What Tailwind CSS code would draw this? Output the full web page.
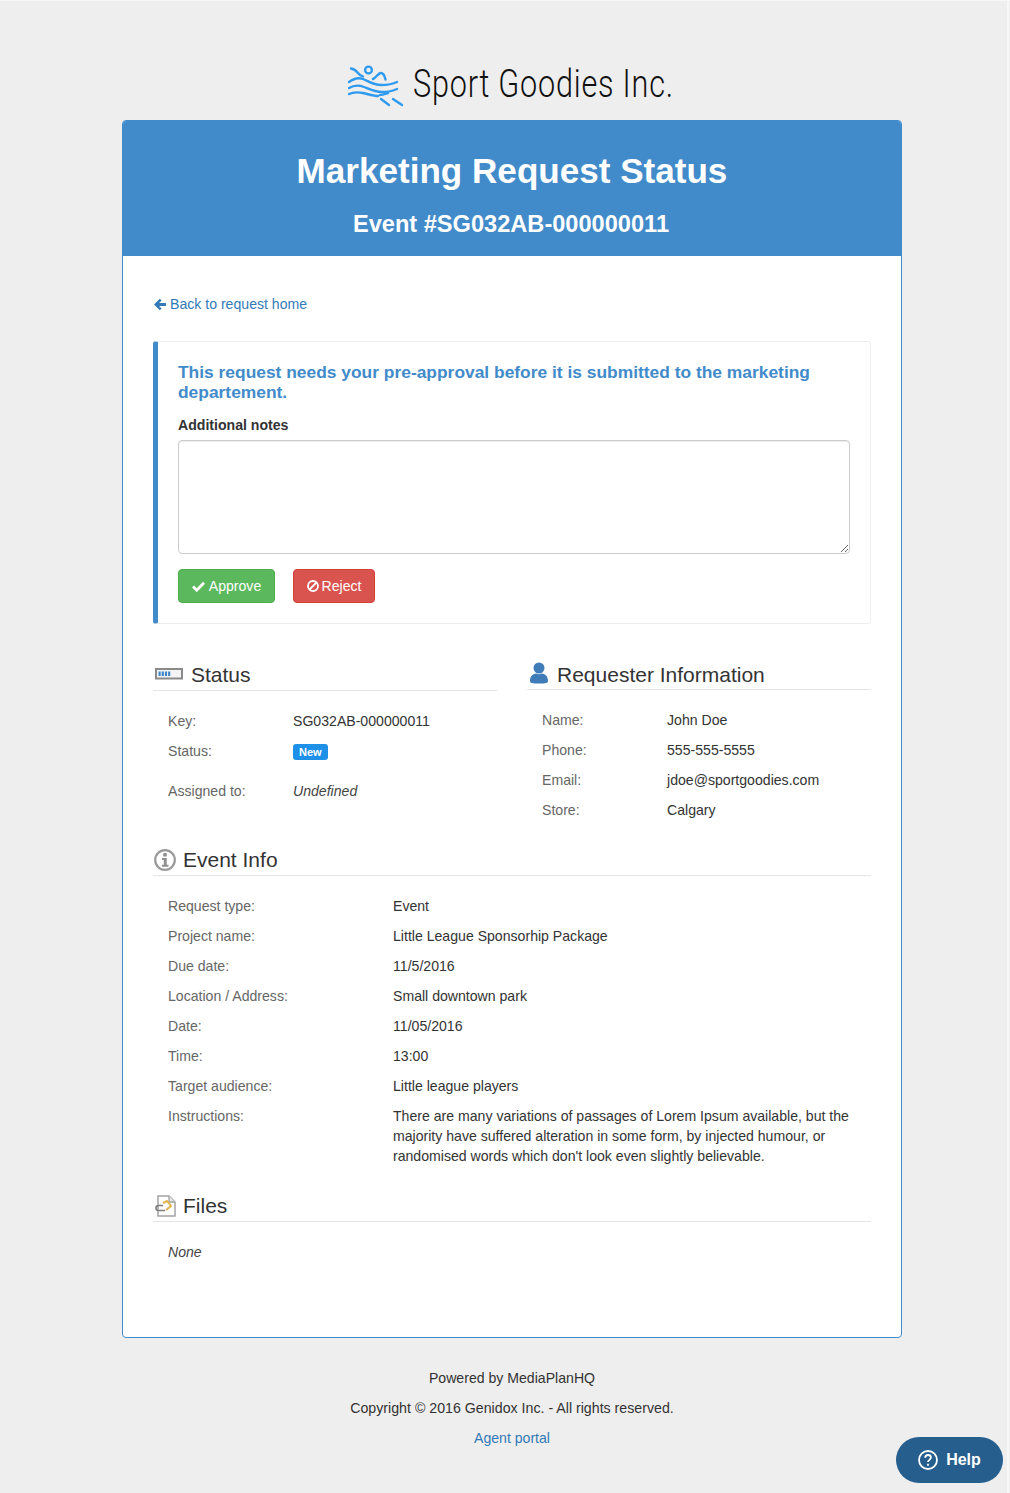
<!DOCTYPE html>
<html lang="en">

<head>
    <meta charset="UTF-8" />
    <meta name="viewport" content="width=device-width, initial-scale=1.0" />
    <title>Marketing Request Status</title>
    <script src="https://cdn.jsdelivr.net/npm/@tailwindcss/browser@4"></script>
</head>

<body class="bg-[#eeeeee] text-[#333333] font-['Liberation_Sans',Arial,sans-serif] text-[14.100px] leading-5">
    <div class="relative h-[1493px] overflow-hidden">
        <!-- window edges -->
        <div class="absolute left-0 top-0 w-full h-px bg-[#f7f7f7]"></div>
        <div class="absolute left-[1007px] top-0 w-[2px] h-full bg-[#f8f8f8]"></div>

        <!-- logo -->
        <div class="h-[120px] pt-[64px] pl-[348px]">
            <div class="flex items-start h-[44px]">
                <svg class="w-[56px] h-[42px] mt-[1px]" viewBox="0 0 56 42" fill="none" stroke="#2f9bf0" stroke-width="2.400" stroke-linecap="round">
                    <circle cx="20.500" cy="5" r="3.400" />
                    <path d="M3 3.500c3 .5 5 2 6.500 4s3 3 5.500 4" />
                    <path d="M25 14c3-1 5-6 8-6s3.500 3 4.500 6.500" />
                    <path d="M1 17c4-3 9-5 14-3s11 6 18 6 12-1 16-3" />
                    <path d="M1 23c5-3 10-3 15-1s11 5 18 5 11-1 15-3" />
                    <path d="M1 29c4-2 9-2 14-1s10 3 15 3" />
                    <path d="M40 28c-3 1-5 2-8 2" />
                    <path d="M33 34l8 6" />
                    <path d="M45 34l9 6" />
                </svg>
                <div class="ml-[9px] w-[260px] text-[39px] leading-[41px] tracking-[1px] font-['Roboto'] font-light text-[#111111] whitespace-nowrap scale-x-[0.785] origin-left">Sport Goodies Inc.</div>
            </div>
        </div>

        <!-- card -->
        <div class="w-[780px] h-[1218px] ml-[122px] bg-white border border-[#428bca] rounded-[4px] overflow-hidden">
            <div class="h-[135px] bg-[#428bca] text-white text-center font-bold pt-[28px]">
                <h1 class="text-[35.100px] leading-[44px]">Marketing Request Status</h1>
                <h2 class="text-[23.600px] leading-[28px] mt-[17px] mr-[2px]">Event #SG032AB-000000011</h2>
            </div>

            <div class="px-[30px]">
                <a class="flex items-center h-5 mt-[38px] text-[#337ab7]" href="#">
                    <svg class="w-[12px] h-[13px] ml-[1px] mr-[4px]" viewBox="0 0 12 13" fill="#337ab7">
                        <path d="M0 6.500 5.800.7l1.800 1.800-2.500 2.500H12v3H5.100l2.500 2.500-1.800 1.800z" />
                    </svg>
                    Back to request home
                </a>

                <!-- pre-approval -->
                <div class="mt-[27px] h-[283px] border border-[#eeeeee] border-l-[5px] border-l-[#428bca] rounded-[3px] pl-5 pr-5 pt-[21px]">
                    <h4 class="text-[17.400px] leading-[19.500px] font-semibold text-[#428bca]">This request needs your pre-approval before it is submitted to the marketing departement.</h4>
                    <label class="block font-bold mt-[13px]">Additional notes</label>
                    <textarea class="block w-[672px] h-[114px] mt-[5px] border border-[#cccccc] rounded-[4px] shadow-[inset_0_1px_1px_rgba(0,0,0,0.075)]"></textarea>
                    <div class="flex gap-[18px] mt-[15px] text-white">
                        <button class="flex items-center justify-center w-[97px] h-[34px] bg-[#5cb85c] border border-[#4cae4c] rounded-[4px]">
                            <svg class="w-[13px] h-[11px] mr-[4px]" viewBox="0 0 13 11" fill="none" stroke="white" stroke-width="2.800">
                                <path d="M1 5.500 4.800 9.200 12 1.800" />
                            </svg>
                            Approve
                        </button>
                        <button class="flex items-center justify-center w-[82px] h-[34px] bg-[#d9534f] border border-[#d43f3a] rounded-[4px]">
                            <svg class="w-[12px] h-[12px] mr-[3px]" viewBox="0 0 12 12" fill="none" stroke="white" stroke-width="1.800">
                                <circle cx="6" cy="6" r="5" />
                                <path d="M2.500 9.500l7-7" />
                            </svg>
                            Reject
                        </button>
                    </div>
                </div>

                <!-- status + requester -->
                <div class="grid grid-cols-2 gap-x-[30px] mt-[36px]">
                    <div>
                        <div class="flex items-center h-[31px] border-b border-[#e5e5e5] pl-[2px] text-[21px] leading-[30px]">
                            <svg class="w-[28px] h-[12px] mr-2 mb-[3px]" viewBox="0 0 28 12">
                                <rect x="1" y="1" width="26" height="9.500" fill="#f4f4f4" stroke="#8a8a8a" stroke-width="2" />
                                <path d="M3.500 3.500h2.200v4.500H3.500zM6.700 3.500h2.200v4.500H6.700zM9.900 3.500h2.200v4.500H9.900zM13.100 3.500h2.200v4.500h-2.200z" fill="#3f86c9" />
                            </svg>
                            <span>Status</span>
                        </div>
                        <div class="pl-[15px] pt-[15px]">
                            <div class="flex h-[30px] items-center"><span class="w-[125px] text-[#666666]">Key:</span><span>SG032AB-000000011</span></div>
                            <div class="flex h-[30px] items-center"><span class="w-[125px] text-[#666666]">Status:</span><span class="bg-[#1e90e8] text-white text-[11px] font-bold leading-[16px] px-[6px] rounded-[3px] mt-[1px]">New</span></div>
                            <div class="flex h-[30px] items-center mt-[10px]"><span class="w-[125px] text-[#666666]">Assigned to:</span><span class="italic text-[#444444]">Undefined</span></div>
                        </div>
                    </div>
                    <div>
                        <div class="flex items-center h-[30px] border-b border-[#e5e5e5] pl-[3px] text-[21px] leading-[30px]">
                            <svg class="w-[18px] h-[22px] mr-[9px] mb-[3px]" viewBox="0 0 18 22" fill="#3f7cb8">
                                <circle cx="9" cy="6" r="5.500" />
                                <path d="M0 19c0-5 3-7 6-7.500 2 1 4 1 6 0 3 .5 6 2.500 6 7.500 0 2-2 2.500-9 2.500S0 21 0 19z" />
                            </svg>
                            <span>Requester Information</span>
                        </div>
                        <div class="pl-[15px] pt-[15px]">
                            <div class="flex h-[30px] items-center"><span class="w-[125px] text-[#666666]">Name:</span><span>John Doe</span></div>
                            <div class="flex h-[30px] items-center"><span class="w-[125px] text-[#666666]">Phone:</span><span>555-555-5555</span></div>
                            <div class="flex h-[30px] items-center"><span class="w-[125px] text-[#666666]">Email:</span><span>jdoe@sportgoodies.com</span></div>
                            <div class="flex h-[30px] items-center"><span class="w-[125px] text-[#666666]">Store:</span><span>Calgary</span></div>
                        </div>
                    </div>
                </div>

                <!-- event info -->
                <div class="flex items-center h-[31px] border-b border-[#e5e5e5] pl-[1px] mt-[20px] text-[21px] leading-[30px]">
                    <svg class="w-[22px] h-[22px] mr-[7px]" viewBox="0 0 22 22">
                        <circle cx="11" cy="11" r="9.800" fill="#fff" stroke="#999999" stroke-width="2.200" />
                        <circle cx="11" cy="5.800" r="2" fill="#8f8f8f" />
                        <path d="M8 9H12.700V15.800H14.500V17.800H8V15.800H9.800V11H8z" fill="#8f8f8f" />
                    </svg>
                    <span>Event Info</span>
                </div>
                <div class="pl-[15px] pt-[15px]">
                    <div class="flex h-[30px] items-center"><span class="w-[225px] text-[#666666]">Request type:</span><span>Event</span></div>
                    <div class="flex h-[30px] items-center"><span class="w-[225px] text-[#666666]">Project name:</span><span>Little League Sponsorhip Package</span></div>
                    <div class="flex h-[30px] items-center"><span class="w-[225px] text-[#666666]">Due date:</span><span>11/5/2016</span></div>
                    <div class="flex h-[30px] items-center"><span class="w-[225px] text-[#666666]">Location / Address:</span><span>Small downtown park</span></div>
                    <div class="flex h-[30px] items-center"><span class="w-[225px] text-[#666666]">Date:</span><span>11/05/2016</span></div>
                    <div class="flex h-[30px] items-center"><span class="w-[225px] text-[#666666]">Time:</span><span>13:00</span></div>
                    <div class="flex h-[30px] items-center"><span class="w-[225px] text-[#666666]">Target audience:</span><span>Little league players</span></div>
                    <div class="flex pt-[5px]"><span class="w-[225px] shrink-0 text-[#666666]">Instructions:</span><span class="w-[470px]">There are many variations of passages of Lorem Ipsum available, but the majority have suffered alteration in some form, by injected humour, or randomised words which don't look even slightly believable.</span></div>
                </div>

                <!-- files -->
                <div class="flex items-center h-[31px] border-b border-[#e5e5e5] pl-[2px] mt-[25px] text-[21px] leading-[30px]">
                    <svg class="w-[21px] h-[22px] mr-[7px]" viewBox="0 0 21 22" fill="none">
                        <path d="M3 1h11l6 6v14H3z" fill="#fff" stroke="#a3a3a3" stroke-width="1.500" />
                        <path d="M14 1v6h6" fill="#e6e6e6" stroke="#a3a3a3" stroke-width="1.300" />
                        <path d="M8 8l4-2 4 5-5 4" stroke="#e3b34c" stroke-width="2" />
                        <path d="M8 10.500H3.500a2.500 2.500 0 0 0 0 5H10" stroke="#7d7d7d" stroke-width="1.600" />
                    </svg>
                    <span>Files</span>
                </div>
                <div class="pl-[15px] pt-[20px] italic text-[#444444]">None</div>
            </div>
        </div>

        <!-- footer -->
        <div class="w-[780px] ml-[122px] pt-[30px] text-center">
            <p class="h-[30px]">Powered by MediaPlanHQ</p>
            <p class="h-[30px] text-[14.200px]">Copyright © 2016 Genidox Inc. - All rights reserved.</p>
            <a class="block text-[#337ab7]" href="#">Agent portal</a>
        </div>

        <!-- help widget -->
        <div class="absolute left-[896px] top-[1437px] w-[107px] h-[46px] rounded-full bg-[#265f8e] text-white flex items-center justify-center font-bold text-[16px]">
            <svg class="w-[20px] h-[20px] mr-[8px]" viewBox="0 0 20 20" fill="none" stroke="white" stroke-width="1.800">
                <circle cx="10" cy="10" r="9" />
                <path d="M7.200 7.800c0-1.800 1.300-2.800 2.900-2.800s2.800 1 2.800 2.500c0 2.400-2.900 2.300-2.900 4.500" />
                <path d="M10 13.700v2" />
            </svg>
            Help
        </div>
    </div>
</body>

</html>
